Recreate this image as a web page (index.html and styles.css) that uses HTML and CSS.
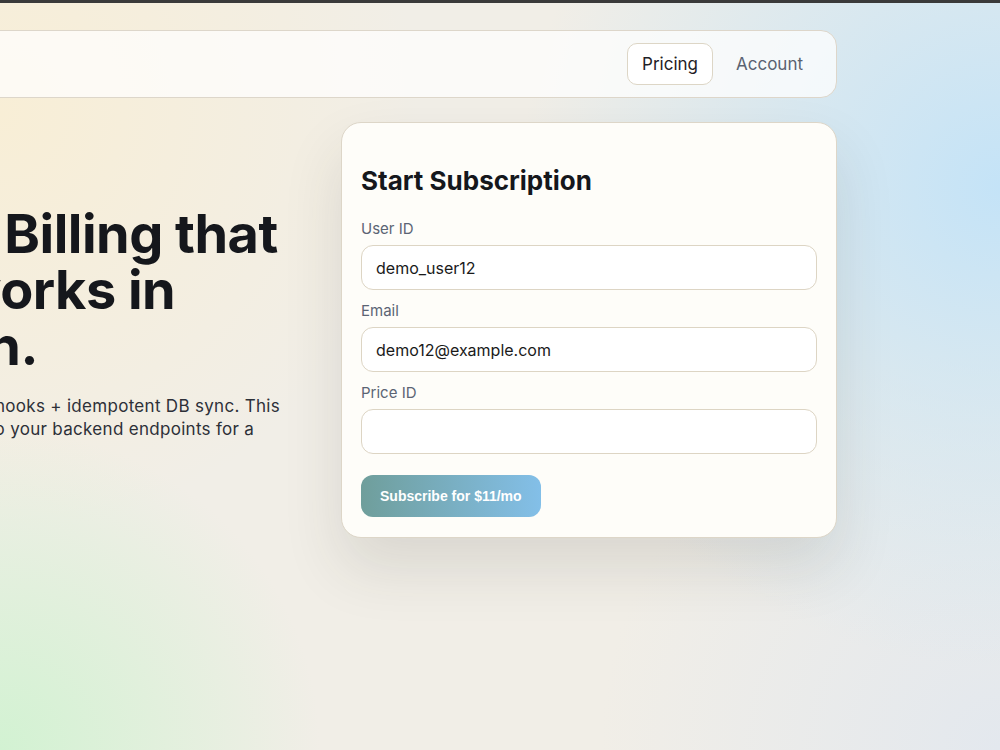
FILE: index.html
```html
<!DOCTYPE html>
<html lang="en">
<head>
    <meta charset="UTF-8">
    <meta name="viewport" content="width=device-width, initial-scale=1.0">
    <title>Billing demo</title>
    <link rel="stylesheet" href="styles.css">
</head>
<body>
    <div class="topbar"></div>
    <div class="page">
        <nav class="nav">
            <div class="brand">BillingKit</div>
            <div class="nav-links">
                <a class="nav-link active" href="#">Pricing</a>
                <a class="nav-link" href="#">Account</a>
            </div>
        </nav>
        <main class="layout">
            <section class="hero">
                <h1>Recurring Billing that actually works in production.</h1>
                <p>Built on Stripe Checkout + webhooks + idempotent DB sync. This demo sends requests straight to your backend endpoints for a quick test.</p>
            </section>
            <section class="card">
                <h2>Start Subscription</h2>
                <div class="form-group">
                    <label for="user-id">User ID</label>
                    <input type="text" id="user-id" value="demo_user12">
                </div>
                <div class="form-group">
                    <label for="email">Email</label>
                    <input type="email" id="email" value="demo12@example.com">
                </div>
                <div class="form-group">
                    <label for="price-id">Price ID</label>
                    <input type="text" id="price-id">
                </div>
                <button class="subscribe">Subscribe for $11/mo</button>
            </section>
        </main>
    </div>
</body>
</html>
```

FILE: styles.css
```css
body {
    margin: 0;
    min-height: 750px;
    font-family: Inter, "Liberation Sans", sans-serif;
    color: #15171c;
    background-color: #f1eee7;
    background-image:
        radial-gradient(circle at 0% 100%, #d2f2d2 0, rgba(210, 242, 210, 0) 320px),
        radial-gradient(circle at 100% 25%, #c4e3f7 0, rgba(196, 227, 247, 0) 480px),
        radial-gradient(circle at 0% 15%, #f8eed6 0, rgba(248, 238, 214, 0) 420px),
        radial-gradient(circle at 100% 100%, #e3e8ee 0, rgba(227, 232, 238, 0) 400px);
    overflow: hidden;
}
.topbar {
    height: 3px;
    background: #3a3a3a;
}
.page {
    width: 1100px;
    margin: 27px 0 0 -263px;
}
.nav {
    display: flex;
    justify-content: space-between;
    align-items: center;
    padding: 12px 18px 12px 20px;
    background: rgba(255, 255, 255, 0.72);
    border: 1px solid #ddd6ca;
    border-radius: 16px;
}
.brand {
    font-weight: 700;
    font-size: 18px;
}
.nav-links {
    display: flex;
    gap: 8px;
}
.nav-link {
    padding: 10px 14px;
    font-size: 17px;
    line-height: 20px;
    color: #5a6271;
    text-decoration: none;
    border: 1px solid transparent;
    border-radius: 10px;
}
.nav-link.active {
    color: #1f2126;
    background: #fff;
    border-color: #ddd6c6;
}
.layout {
    display: grid;
    grid-template-columns: 1fr 496px;
    gap: 24px;
    margin-top: 24px;
    align-items: start;
}
.hero {
    padding-top: 84px;
}
.hero h1 {
    margin: 0;
    font-size: 54px;
    line-height: 56px;
    font-weight: 700;
    letter-spacing: -0.5px;
}
.hero p {
    margin: 21px 0 0;
    max-width: 560px;
    font-size: 17px;
    line-height: 23px;
    letter-spacing: 0.3px;
    color: #2d3038;
}
.card {
    background: #fefdf9;
    border: 1px solid #ddd6c8;
    border-radius: 20px;
    padding: 19px 19px 20px;
    box-shadow: 0 30px 60px rgba(50, 50, 40, 0.12);
}
.card h2 {
    margin: 23px 0 24px;
    font-size: 26px;
    line-height: 31px;
    font-weight: 700;
}
.form-group {
    margin-bottom: 12px;
}
.form-group label {
    display: block;
    margin-bottom: 7px;
    font-size: 15px;
    line-height: 18px;
    color: #5b6474;
}
.form-group input {
    display: block;
    width: 100%;
    height: 45px;
    box-sizing: border-box;
    padding: 0 14px;
    font-family: inherit;
    font-size: 16px;
    color: #1a1a1a;
    background: #fff;
    border: 1px solid #ddd5c4;
    border-radius: 12px;
}
.subscribe {
    margin-top: 9px;
    height: 42px;
    padding: 0 19px;
    font-family: "Liberation Sans", Arial, sans-serif;
    font-size: 14px;
    font-weight: 700;
    color: #fff;
    background: linear-gradient(90deg, #6f9e9b, #83bfe8);
    border: none;
    border-radius: 12px;
    cursor: pointer;
}
```
